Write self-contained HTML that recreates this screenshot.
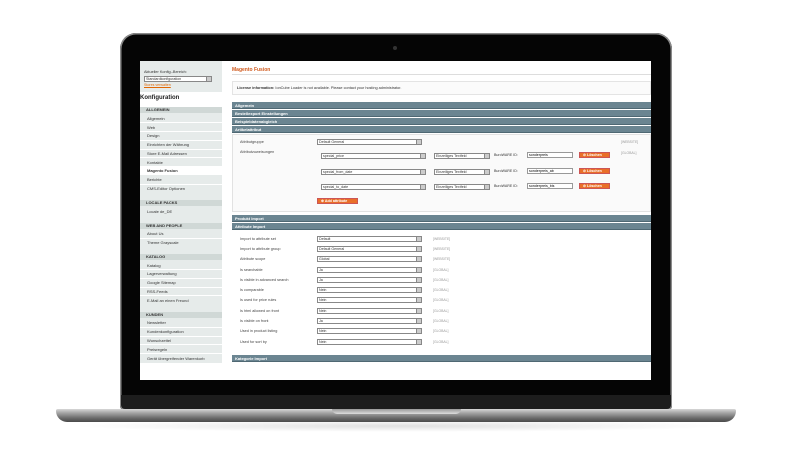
<!DOCTYPE html>
<html><head><style>
*{margin:0;padding:0;box-sizing:border-box}
body{width:800px;height:450px;background:#fff;position:relative;overflow:hidden;font-family:"Liberation Sans",sans-serif}
.a{position:absolute;white-space:nowrap}
#lid{left:120px;top:33px;width:552px;height:377px;background:#050505;border-radius:16px 16px 4px 4px;box-shadow:0 0 0 1.5px #8a8a8a inset}
#chin{left:121px;top:395px;width:550px;height:14px;background:#1d1d1d;border-radius:0 0 4px 4px}
#base{left:56px;top:409px;width:680px;height:13px;border-radius:2px 2px 12px 12px;background:linear-gradient(#d8d8d8,#a5a5a5 30%,#6a6a6a 70%,#4a4a4a)}
#notch{left:332px;top:409px;width:129px;height:5px;background:linear-gradient(#999,#ddd);border-radius:0 0 5px 5px}
#shadow{left:70px;top:420px;width:660px;height:12px;background:radial-gradient(ellipse at center,rgba(0,0,0,.12),rgba(0,0,0,0) 70%)}
#scr{left:140px;top:61px;width:511px;height:319px;background:#fff;overflow:hidden}
.t{font-size:4.2px;color:#333}
.sb{position:absolute;left:0;width:82px;background:#e6ebea}
.sh{position:absolute;left:0;width:82px;height:6px;background:#d0d8d6;font-size:4px;font-weight:bold;color:#333;padding-left:6px;line-height:6px}
.si{position:absolute;left:7px;font-size:4px;color:#333}
.sl{position:absolute;left:0;width:82px;height:1px;background:#fff}
.hd{position:absolute;left:92px;width:419px;height:7px;background:#6b8591;border-bottom:1px solid #4f6873;font-size:4px;font-weight:bold;color:#fff;padding-left:3px;line-height:7px}
.sel{position:absolute;height:6px;border:1px solid #888;background:#fff;font-size:3.6px;color:#333;line-height:4px;padding-left:1px;overflow:hidden}
.sel:after{content:"";position:absolute;right:0;top:0;width:4px;height:4px;background:#ccc;border-left:1px solid #888}
.lb{position:absolute;left:100px;font-size:3.8px;color:#444}
.sc{position:absolute;font-size:3.4px;color:#999}
.btn{position:absolute;height:6px;background:#e96f28;border:1px solid #c55;font-size:3.6px;color:#fff;font-weight:bold;line-height:4px;padding-left:3px}
</style></head><body>
<div class="a" id="shadow"></div>
<div class="a" id="lid"></div>
<div class="a" id="chin"></div>
<div class="a" id="base"></div>
<div class="a" id="notch"></div>
<div class="a" style="left:393px;top:46px;width:4px;height:4px;border-radius:50%;background:#333"></div>
<div class="a" id="scr">
 <div class="sb" style="top:0;height:31px"></div>
 <div class="a t" style="left:4px;top:9px;font-size:3.8px">Aktueller Konfig.-Bereich:</div>
 <div class="sel" style="left:4px;top:15px;width:68px">Standardkonfiguration</div>
 <div class="a" style="left:4px;top:22px;font-size:3.6px;color:#e26703;text-decoration:underline">Stores verwalten</div>
 <div class="a" style="left:0;top:34px;font-size:6px;color:#222;font-weight:bold">Konfiguration</div>
 <div class="sb" style="top:46px;height:256px"></div>
 <div class="sh" style="top:46px">ALLGEMEIN</div>
 <div class="si" style="top:55px">Allgemein</div><div class="sl" style="top:61px"></div>
 <div class="si" style="top:64px">Web</div><div class="sl" style="top:70px"></div>
 <div class="si" style="top:72px">Design</div><div class="sl" style="top:79px"></div>
 <div class="si" style="top:81px">Einrichten der Währung</div><div class="sl" style="top:88px"></div>
 <div class="si" style="top:90px">Store E-Mail Adressen</div><div class="sl" style="top:96px"></div>
 <div class="si" style="top:99px">Kontakte</div>
 <div class="a" style="left:0;top:105px;width:82px;height:9px;background:#fff"></div>
 <div class="si" style="top:107px;font-weight:bold">Magento Fusion</div>
 <div class="si" style="top:116px">Berichte</div><div class="sl" style="top:123px"></div>
 <div class="si" style="top:125px">CMS-Editor Optionen</div>
 <div class="sh" style="top:139px">LOCALE PACKS</div>
 <div class="si" style="top:148px">Locale de_DE</div>
 <div class="sh" style="top:162px">WEB AND PEOPLE</div>
 <div class="si" style="top:170px">About Us</div><div class="sl" style="top:177px"></div>
 <div class="si" style="top:179px">Theme Grayscale</div>
 <div class="sh" style="top:193px">KATALOG</div>
 <div class="si" style="top:202px">Katalog</div><div class="sl" style="top:208px"></div>
 <div class="si" style="top:210px">Lagerverwaltung</div><div class="sl" style="top:217px"></div>
 <div class="si" style="top:219px">Google Sitemap</div><div class="sl" style="top:226px"></div>
 <div class="si" style="top:228px">RSS-Feeds</div><div class="sl" style="top:234px"></div>
 <div class="si" style="top:237px">E-Mail an einen Freund</div>
 <div class="sh" style="top:251px">KUNDEN</div>
 <div class="si" style="top:259px">Newsletter</div><div class="sl" style="top:266px"></div>
 <div class="si" style="top:268px">Kundenkonfiguration</div><div class="sl" style="top:275px"></div>
 <div class="si" style="top:277px">Wunschzettel</div><div class="sl" style="top:283px"></div>
 <div class="si" style="top:286px">Preisregeln</div><div class="sl" style="top:292px"></div>
 <div class="si" style="top:295px">Gerät übergreifender Warenkorb</div>

 <div class="a" style="left:92px;top:6px;font-size:5px;font-weight:bold;color:#d0591c">Magento Fusion</div>
 <div class="a" style="left:92px;top:13px;width:419px;height:1px;background:#ddd"></div>
 <div class="a" style="left:92px;top:20px;width:419px;height:14px;border:1px solid #e4e4e4;background:#fbfbfb"></div>
 <div class="a" style="left:97px;top:25px;font-size:3.8px;color:#333"><b>License information:</b> IonCube Loader is not available. Please contact your hosting administrator.</div>
 <div class="hd" style="top:41px">Allgemein</div>
 <div class="hd" style="top:49px">Bestellexport Einstellungen</div>
 <div class="hd" style="top:57px">Beispieldatenabgleich</div>
 <div class="hd" style="top:65px">Artikelattribut</div>
 <div class="a" style="left:92px;top:73px;width:419px;height:78px;background:#fafafa;border:1px solid #e2e2e2"></div>
 <div class="lb" style="top:79px">Attributgruppe</div>
 <div class="sel" style="left:177px;top:78px;width:105px">Default General</div>
 <div class="sc" style="left:481px;top:79px">[WEBSITE]</div>
 <div class="lb" style="top:89px">Attributzuweisungen</div>
 <div class="sc" style="left:481px;top:90px">[GLOBAL]</div>
 <div class="sel" style="left:181px;top:92px;width:105px">special_price</div>
 <div class="sel" style="left:294px;top:92px;width:56px">Einzeiliges Textfeld</div>
 <div class="a t" style="left:354px;top:92px;font-size:3.6px">BuroWARE ID:</div>
 <div class="a" style="left:387px;top:91px;width:46px;height:6px;border:1px solid #999;background:#fff;font-size:3.6px;padding-left:1px;line-height:4px">sonderpreis</div>
 <div class="btn" style="left:439px;top:91px;width:31px">⊘ Löschen</div>
 <div class="sel" style="left:181px;top:108px;width:105px">special_from_date</div>
 <div class="sel" style="left:294px;top:108px;width:56px">Einzeiliges Textfeld</div>
 <div class="a t" style="left:354px;top:108px;font-size:3.6px">BuroWARE ID:</div>
 <div class="a" style="left:387px;top:107px;width:46px;height:6px;border:1px solid #999;background:#fff;font-size:3.6px;padding-left:1px;line-height:4px">sonderpreis_ab</div>
 <div class="btn" style="left:439px;top:107px;width:31px">⊘ Löschen</div>
 <div class="sel" style="left:181px;top:123px;width:105px">special_to_date</div>
 <div class="sel" style="left:294px;top:123px;width:56px">Einzeiliges Textfeld</div>
 <div class="a t" style="left:354px;top:123px;font-size:3.6px">BuroWARE ID:</div>
 <div class="a" style="left:387px;top:122px;width:46px;height:6px;border:1px solid #999;background:#fff;font-size:3.6px;padding-left:1px;line-height:4px">sonderpreis_bis</div>
 <div class="btn" style="left:439px;top:122px;width:31px">⊘ Löschen</div>
 <div class="btn" style="left:177px;top:137px;width:41px">⊕ Add attribute</div>
 <div class="hd" style="top:154px">Produkt Import</div>
 <div class="hd" style="top:162px">Attribute Import</div>
 <div class="lb" style="top:176px">Import to attribute set</div><div class="sel" style="left:177px;top:175px;width:105px">Default</div><div class="sc" style="left:293px;top:176px">[WEBSITE]</div>
 <div class="lb" style="top:186px">Import to attribute group</div><div class="sel" style="left:177px;top:185px;width:105px">Default General</div><div class="sc" style="left:293px;top:186px">[WEBSITE]</div>
 <div class="lb" style="top:196px">Attribute scope</div><div class="sel" style="left:177px;top:195px;width:105px">Global</div><div class="sc" style="left:293px;top:196px">[WEBSITE]</div>
 <div class="lb" style="top:207px">Is searchable</div><div class="sel" style="left:177px;top:206px;width:105px">Ja</div><div class="sc" style="left:293px;top:207px">[GLOBAL]</div>
 <div class="lb" style="top:217px">Is visible in advanced search</div><div class="sel" style="left:177px;top:216px;width:105px">Ja</div><div class="sc" style="left:293px;top:217px">[GLOBAL]</div>
 <div class="lb" style="top:227px">Is comparable</div><div class="sel" style="left:177px;top:226px;width:105px">Nein</div><div class="sc" style="left:293px;top:227px">[GLOBAL]</div>
 <div class="lb" style="top:237px">Is used for price rules</div><div class="sel" style="left:177px;top:236px;width:105px">Nein</div><div class="sc" style="left:293px;top:237px">[GLOBAL]</div>
 <div class="lb" style="top:248px">Is html allowed on front</div><div class="sel" style="left:177px;top:247px;width:105px">Nein</div><div class="sc" style="left:293px;top:248px">[GLOBAL]</div>
 <div class="lb" style="top:258px">Is visible on front</div><div class="sel" style="left:177px;top:257px;width:105px">Ja</div><div class="sc" style="left:293px;top:258px">[GLOBAL]</div>
 <div class="lb" style="top:268px">Used in product listing</div><div class="sel" style="left:177px;top:267px;width:105px">Nein</div><div class="sc" style="left:293px;top:268px">[GLOBAL]</div>
 <div class="lb" style="top:279px">Used for sort by</div><div class="sel" style="left:177px;top:278px;width:105px">Nein</div><div class="sc" style="left:293px;top:279px">[GLOBAL]</div>
 <div class="hd" style="top:294px">Kategorie Import</div>
</div>
</body></html>
